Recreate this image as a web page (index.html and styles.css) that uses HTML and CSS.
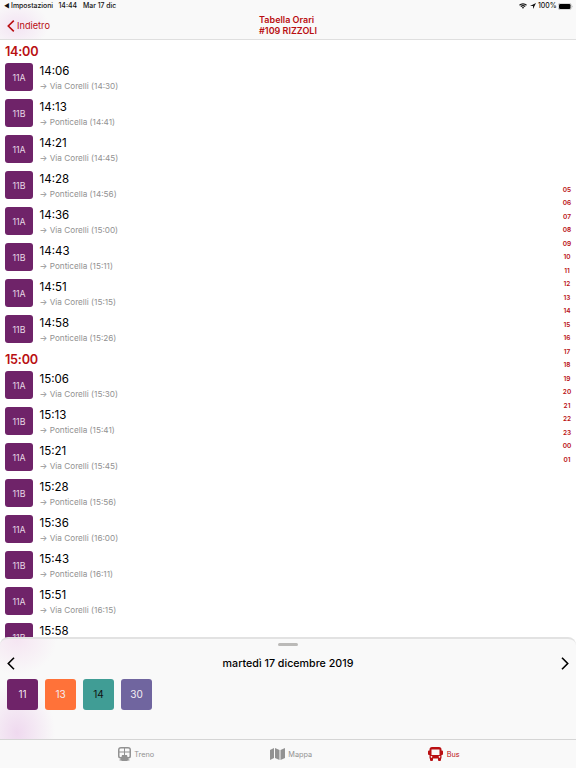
FILE: index.html
```html
<!DOCTYPE html>
<html lang="it">
<head>
    <meta charset="UTF-8">
    <meta name="viewport" content="width=device-width, initial-scale=1.0">
    <title>Tabella Orari - #109 RIZZOLI</title>
    <link rel="stylesheet" href="styles.css">
</head>
<body>
    <header>
        <div class="status">
            <span class="back-app">◀</span>
            <span class="app">Impostazioni</span>
            <span class="clock">14:44</span>
            <span class="date">Mar 17 dic</span>
            <div class="status-right">
                <svg width="8" height="6" viewBox="0 0 16 12"><path d="M1 4.5a10 10 0 0 1 14 0M3.7 7.2a6.2 6.2 0 0 1 8.6 0" fill="none" stroke="#111" stroke-width="2.4"/><path d="M5.6 9a3.5 3.5 0 0 1 4.8 0L8 11.5z" fill="#111"/></svg>
                <svg class="location" width="6" height="6" viewBox="0 0 12 12"><path d="M12 0L0 6h6v6z" fill="#111"/></svg>
                <span class="percent">100%</span>
                <svg width="15" height="7" viewBox="0 0 30 14"><rect x=".5" y=".5" width="26" height="13" rx="4" fill="#fff" stroke="#999"/><rect x="2" y="2" width="23" height="10" rx="2.5" fill="#000"/><path d="M28 5v4q2-2 0-4" fill="#999"/></svg>
            </div>
        </div>
        <div class="nav">
            <a class="back" href="#"><svg width="8" height="12" viewBox="0 0 8 12"><path d="M6.8.7L1.3 6l5.5 5.3" fill="none" stroke="#b90f12" stroke-width="1.6"/></svg>Indietro</a>
            <div class="title"><div>Tabella Orari</div><div>#109 RIZZOLI</div></div>
        </div>
    </header>

    <main>
        <div class="list">
            <h2>14:00</h2>
            <div class="row"><div class="line">11A</div><div class="trip"><b>14:06</b><span>→ Via Corelli (14:30)</span></div></div>
            <div class="row"><div class="line">11B</div><div class="trip"><b>14:13</b><span>→ Ponticella (14:41)</span></div></div>
            <div class="row"><div class="line">11A</div><div class="trip"><b>14:21</b><span>→ Via Corelli (14:45)</span></div></div>
            <div class="row"><div class="line">11B</div><div class="trip"><b>14:28</b><span>→ Ponticella (14:56)</span></div></div>
            <div class="row"><div class="line">11A</div><div class="trip"><b>14:36</b><span>→ Via Corelli (15:00)</span></div></div>
            <div class="row"><div class="line">11B</div><div class="trip"><b>14:43</b><span>→ Ponticella (15:11)</span></div></div>
            <div class="row"><div class="line">11A</div><div class="trip"><b>14:51</b><span>→ Via Corelli (15:15)</span></div></div>
            <div class="row"><div class="line">11B</div><div class="trip"><b>14:58</b><span>→ Ponticella (15:26)</span></div></div>
            <h2>15:00</h2>
            <div class="row"><div class="line">11A</div><div class="trip"><b>15:06</b><span>→ Via Corelli (15:30)</span></div></div>
            <div class="row"><div class="line">11B</div><div class="trip"><b>15:13</b><span>→ Ponticella (15:41)</span></div></div>
            <div class="row"><div class="line">11A</div><div class="trip"><b>15:21</b><span>→ Via Corelli (15:45)</span></div></div>
            <div class="row"><div class="line">11B</div><div class="trip"><b>15:28</b><span>→ Ponticella (15:56)</span></div></div>
            <div class="row"><div class="line">11A</div><div class="trip"><b>15:36</b><span>→ Via Corelli (16:00)</span></div></div>
            <div class="row"><div class="line">11B</div><div class="trip"><b>15:43</b><span>→ Ponticella (16:11)</span></div></div>
            <div class="row"><div class="line">11A</div><div class="trip"><b>15:51</b><span>→ Via Corelli (16:15)</span></div></div>
            <div class="row"><div class="line">11B</div><div class="trip"><b>15:58</b></div></div>
        </div>
        <div class="hours">
            <span>05</span><span>06</span><span>07</span><span>08</span><span>09</span><span>10</span><span>11</span>
            <span>12</span><span>13</span><span>14</span><span>15</span><span>16</span><span>17</span><span>18</span>
            <span>19</span><span>20</span><span>21</span><span>22</span><span>23</span><span>00</span><span>01</span>
        </div>
    </main>

    <section class="sheet">
        <div class="handle"></div>
        <div class="day">
            <svg width="8" height="13" viewBox="0 0 8 13"><path d="M7 .8L1.3 6.5 7 12.2" fill="none" stroke="#000" stroke-width="1.6"/></svg>
            <span>martedì 17 dicembre 2019</span>
            <svg width="8" height="13" viewBox="0 0 8 13"><path d="M1 .8l5.7 5.7L1 12.2" fill="none" stroke="#000" stroke-width="1.6"/></svg>
        </div>
        <div class="filters">
            <div class="filter purple">11</div>
            <div class="filter orange">13</div>
            <div class="filter teal">14</div>
            <div class="filter violet">30</div>
        </div>
    </section>

    <nav class="tabs">
        <a class="tab" href="#">
            <svg width="13" height="14" viewBox="0 0 26 28"><path fill="#929292" fill-rule="evenodd" d="M6 0h14q6 0 6 6v12q0 5-5 5v2h2v2h-4v1H7v-1H3v-2h2v-2q-5 0-5-5V6Q0 0 6 0zM6 3Q3 3 3 5v4h9V3zm8 0v6h9V5q0-2-3-2zM3 11v7q0 2 2 2h2l1-4h4v-5zm11 0v5h4l1 4h2q2 0 2-2v-7z"/></svg>
            <span>Treno</span>
        </a>
        <a class="tab mappa" href="#">
            <svg width="15" height="12" viewBox="0 0 30 24"><path d="M0 4l8-4v20l-8 4zM10 0l9 4v20l-9-4zM21 4l9-4v20l-9 4z" fill="#929292"/></svg>
            <span>Mappa</span>
        </a>
        <a class="tab bus" href="#">
            <svg width="15" height="14" viewBox="0 0 30 28"><path fill="#b90f12" fill-rule="evenodd" d="M8 0h14q5 0 5 5v2h1q2 0 2 2v5q0 2-2 2h-1v7h-1v3q0 2-2 2h-2q-2 0-2-2v-3H10v3q0 2-2 2H6q-2 0-2-2v-3H3v-7H2q-2 0-2-2V9q0-2 2-2h1V5q0-5 5-5zM7 5v11h16V5zM7 18a1.600 1.600 0 1 0 .01 0zM23 18a1.600 1.600 0 1 0 .01 0z"/></svg>
            <span>Bus</span>
        </a>
    </nav>
</body>
</html>
```
FILE: styles.css
```css
* { box-sizing: border-box; }
body { margin: 0; height: 768px; display: flex; flex-direction: column; overflow: hidden; background: #fff; color: #111; font-family: Inter, "Liberation Sans", sans-serif; }
a { color: inherit; text-decoration: none; }
svg { display: block; flex: none; }

header { height: 40px; flex: none; border-bottom: 1px solid #dfdfdf; background: radial-gradient(ellipse 32px 24px at 17px 26px, #f3e3f3, rgba(249, 249, 249, 0)) #f9f9f9; }
.status { display: flex; align-items: center; height: 12px; padding: 0 3px 0 4px; font-size: 6.9px; font-weight: 500; line-height: 12px; white-space: nowrap; }
.back-app { width: 7px; font-size: 6px; }
.app { width: 47.5px; }
.clock { width: 24.5px; }
.status-right { display: flex; align-items: center; margin-left: auto; }
.location { margin: 0 2px 0 3px; }
.percent { width: 20px; }
.nav { display: grid; grid-template-columns: 1fr auto 1fr; height: 27px; color: #b90f12; }
.back { display: flex; align-items: center; gap: 2px; padding-left: 7px; font-size: 9.2px; }
.title { padding-top: 3px; font-size: 9px; font-weight: 600; line-height: 10.5px; }

main { display: flex; justify-content: space-between; height: 598px; flex: none; overflow: hidden; }
h2 { height: 20px; margin: 0; padding: 5px 0 0 5px; font-size: 12.7px; line-height: 16px; font-weight: 600; letter-spacing: -0.25px; color: #b90f12; }
.list { margin-top: -0.6px; }
.row { display: flex; height: 36px; padding: 4px 5px; gap: 6.6px; }
.line { width: 28px; height: 28px; border-radius: 3px; background: #6f2369; color: #e6d8e5; font-size: 8.8px; line-height: 29px; text-align: center; }
.trip b { display: block; font-size: 11.5px; font-weight: 400; line-height: 16px; color: #000; }
.trip span { display: block; font-size: 8.2px; line-height: 14.4px; color: #929292; white-space: nowrap; }
.hours { display: flex; flex-direction: column; width: 18px; padding-top: 143.6px; font-size: 6.5px; font-weight: 600; line-height: 13.5px; text-align: center; color: #b90f12; }

.sheet { height: 102px; flex: none; margin-top: -1px; border-top: 2px solid #e2e2e2; border-radius: 8px 8px 0 0; background: radial-gradient(ellipse 38px 52px at 17px 94px, #efd9ef, rgba(249, 249, 249, 0)), radial-gradient(ellipse 40px 36px at 17px 0, #f5e5f2, rgba(249, 249, 249, 0)) #f9f9f9; }
.handle { width: 20px; height: 3px; margin: 4px auto 0; border-radius: 2px; background: #bbbab8; }
.day { display: flex; align-items: center; justify-content: space-between; height: 33.4px; padding: 2px 7px 0; font-size: 10.7px; font-weight: 500; color: #000; }
.filters { display: flex; gap: 7px; padding: 0 7px; }
.filter { width: 31px; height: 31px; border-radius: 3px; color: #f4edf3; font-size: 10px; line-height: 31px; text-align: center; }
.purple { background: #6f2369; }
.orange { background: #ff7239; }
.teal { background: #409d95; color: #111; }
.violet { background: #70659f; }

.tabs { display: grid; grid-template-columns: repeat(3, 154px); height: 29px; flex: none; padding-left: 59px; border-top: 1px solid #d5d5d5; background: #f9f9f9; font-size: 7.3px; color: #929292; }
.tab { display: flex; align-items: center; justify-content: center; gap: 3.5px; }
.mappa { padding-left: 2px; }
.bus { color: #b90f12; }
```
